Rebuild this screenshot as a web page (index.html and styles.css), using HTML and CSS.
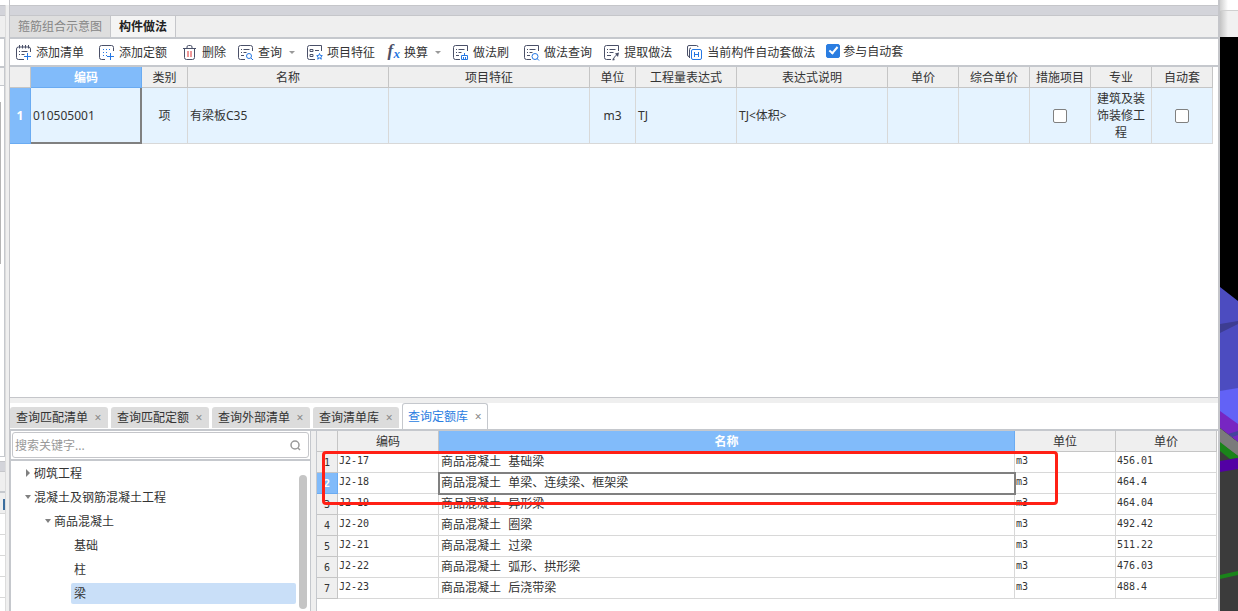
FILE: index.html
```html
<!DOCTYPE html>
<html lang="zh-CN">
<head>
<meta charset="utf-8">
<title>构件做法</title>
<link rel="stylesheet" href="styles.css">
</head>
<body>
<div class="app">
  <aside class="edge" aria-hidden="true">
    <div class="edge-gap"></div>
    <div class="edge-title"></div>
    <div class="edge-tabs"></div>
    <div class="edge-tools"></div>
    <div class="edge-head"></div>
    <div class="edge-body"><div class="edge-thumb"></div></div>
    <div class="edge-title"></div>
    <div class="edge-tabs edge-tabs-low"></div>
    <div class="edge-row edge-row-marked"></div>
    <div class="edge-row"></div>
    <div class="edge-row"></div>
    <div class="edge-row"></div>
    <div class="edge-row"></div>
    <div class="edge-row edge-row-last"></div>
  </aside>
  <div class="splitter"></div>

  <main class="main">
    <div class="titlebar"></div>
    <nav class="top-tabs">
      <button type="button" class="top-tab">箍筋组合示意图</button>
      <button type="button" class="top-tab top-tab-active">构件做法</button>
    </nav>

    <div class="toolbar">
      <button type="button" class="tool tool-spaced">
        <svg class="icon" viewBox="0 0 16 16"><path d="M8 14.500H2.500a2 2 0 0 1-2-2V4a2 2 0 0 1 2-2h10a2 2 0 0 1 2 2v3M3.500 0v3.500M6.500 0v3.500M9.500 0v3.500M12.500 0v3.500M3 6.500h1M5.500 6.500h6M3 9.500h1M5.500 9.500h3"/><path class="blue" d="M11.500 8v7M8 11.500h7"/></svg>
        添加清单</button>
      <button type="button" class="tool tool-spaced">
        <svg class="icon" viewBox="0 0 16 16"><path d="M6 14.500H2.500a2 2 0 0 1-2-2v-10a2 2 0 0 1 2-2h10a2 2 0 0 1 2 2V6"/><path class="blue" d="M11.500 8v7M8 11.500h7"/><path class="blue" stroke-dasharray="1 2" d="M4 4.500h8M4 7.500h6M4 10.500h4"/></svg>
        添加定额</button>
      <button type="button" class="tool">
        <svg class="icon" viewBox="0 0 16 16"><path d="M1 3.500h13M2.500 3.500v9a2 2 0 0 0 2 2h6a2 2 0 0 0 2-2v-9M5 3.500V2a1.500 1.500 0 0 1 1.500-1.500h2A1.500 1.500 0 0 1 10 2v1.500"/><path class="red" d="M6 6v6M9 6v6"/></svg>
        删除</button>
      <button type="button" class="tool">
        <svg class="icon" viewBox="0 0 16 16"><path d="M7 14.500H2.500a2 2 0 0 1-2-2v-10a2 2 0 0 1 2-2h10a2 2 0 0 1 2 2V6M3 4.500h1M5.500 4.500h6M3 7.500h1M5.500 7.500h3M3 10.500h3"/><circle class="blue" cx="11" cy="11" r="2.500"/><path class="blue" d="M13 13l2 2"/></svg>
        查询<span class="caret"></span></button>
      <button type="button" class="tool">
        <svg class="icon" viewBox="0 0 16 16"><path d="M8 14.500H2.500a2 2 0 0 1-2-2v-10a2 2 0 0 1 2-2h12V6M3 4.500h3v2H3zM3 9.500h3v2H3zM8 5.500h4"/><path class="blue" d="M12.500 8.500l.8 2 2 .2-1.500 1.300.5 2.200-1.800-1.200-1.800 1.200.5-2.200-1.500-1.300 2-.2z"/></svg>
        项目特征</button>
      <button type="button" class="tool">
        <span class="fx"><i class="fx-f">f</i><i class="fx-x">x</i></span>
        换算<span class="caret"></span></button>
      <button type="button" class="tool tool-spaced">
        <svg class="icon" viewBox="0 0 16 16"><path d="M7 14.500H2.500a2 2 0 0 1-2-2v-10a2 2 0 0 1 2-2h12V6M3 4.500h1M5.500 4.500h6M3 7.500h1M5.500 7.500h3M3 10.500h3"/><path class="blue" d="M8.500 14.500v-4h6v4zM11.500 8v2.500M10.500 14v-2M12.500 14v-2"/></svg>
        做法刷</button>
      <button type="button" class="tool">
        <svg class="icon" viewBox="0 0 16 16"><path d="M7 14.500H2.500a2 2 0 0 1-2-2v-10a2 2 0 0 1 2-2h12V6M3 4.500h1M5.500 4.500h6M3 7.500h1M5.500 7.500h3M3 10.500h3"/><circle class="blue" cx="11" cy="11.500" r="3"/><path class="blue" d="M13 13.500l2 2"/></svg>
        做法查询</button>
      <button type="button" class="tool tool-spaced">
        <svg class="icon" viewBox="0 0 16 16"><path d="M7 14.500H2.500a2 2 0 0 1-2-2v-10a2 2 0 0 1 2-2h12V6M3 4.500h1M5.500 4.500h6M3 7.500h1M5.500 7.500h4M3 10.500h4M9 15l1.500-3 3-3"/><path class="solid" d="M11 8.500l4-1-1 4.500zM8.500 15.500l.5-2.500 2 2z"/></svg>
        提取做法</button>
      <button type="button" class="tool">
        <svg class="icon" viewBox="0 0 16 16"><path d="M2 11.500a1.500 1.500 0 0 1-1.500-1.500V2A1.500 1.500 0 0 1 2 .5h7.500A1.500 1.500 0 0 1 11 2M2.500 13V4.500A1.500 1.500 0 0 1 4 3"/><rect class="blue" x="4.500" y="4.500" width="10" height="10" rx="1.500"/><path class="blue" d="M7.500 7v5M11.500 7v5M7.500 9.500h4"/></svg>
        当前构件自动套做法</button>
      <label class="join"><input type="checkbox" class="check" checked>参与自动套</label>
    </div>

    <section class="bill">
      <table class="grid bill-grid">
        <colgroup>
          <col class="c-num"><col class="c-code"><col class="c-kind"><col><col><col class="c-kind">
          <col class="c-expr"><col class="c-desc"><col class="c-price"><col class="c-price">
          <col class="c-flag"><col class="c-flag"><col class="c-flag">
        </colgroup>
        <thead>
          <tr><th></th><th class="head-active">编码</th><th>类别</th><th>名称</th><th>项目特征</th><th>单位</th><th>工程量表达式</th><th>表达式说明</th><th>单价</th><th>综合单价</th><th>措施项目</th><th>专业</th><th>自动套</th></tr>
        </thead>
        <tbody>
          <tr>
            <th class="num num-active">1</th><td class="cell-current">010505001</td><td class="center">项</td><td>有梁板C35</td><td></td><td class="center">m3</td><td>TJ</td><td>TJ&lt;体积&gt;</td><td></td><td></td>
            <td class="center"><input type="checkbox" class="check" aria-label="措施项目"></td>
            <td class="center">建筑及装饰装修工程</td>
            <td class="center"><input type="checkbox" class="check" aria-label="自动套"></td>
          </tr>
        </tbody>
      </table>
    </section>
    <div class="h-splitter"></div>

    <section class="query">
      <nav class="query-tabs">
        <div class="query-tab"><button type="button">查询匹配清单</button><button type="button" class="close" aria-label="关闭">×</button></div>
        <div class="query-tab"><button type="button">查询匹配定额</button><button type="button" class="close" aria-label="关闭">×</button></div>
        <div class="query-tab"><button type="button">查询外部清单</button><button type="button" class="close" aria-label="关闭">×</button></div>
        <div class="query-tab"><button type="button">查询清单库</button><button type="button" class="close" aria-label="关闭">×</button></div>
        <div class="query-tab query-tab-active"><button type="button">查询定额库</button><button type="button" class="close" aria-label="关闭">×</button></div>
      </nav>
      <div class="query-body">
        <div class="library">
          <div class="search">
            <input type="text" placeholder="搜索关键字..." aria-label="搜索关键字">
            <svg class="search-icon" viewBox="0 0 12 12"><circle cx="5" cy="5" r="4"/><path d="M8 8l2 2"/></svg>
          </div>
          <div class="tree-area">
            <ul class="tree">
              <li class="node level-1 closed">砌筑工程</li>
              <li class="node level-1 open">混凝土及钢筋混凝土工程</li>
              <li class="node level-2 open">商品混凝土</li>
              <li class="node level-3">基础</li>
              <li class="node level-3">柱</li>
              <li class="node level-3"><span class="picked">梁</span></li>
            </ul>
            <div class="scroll"><div class="scroll-thumb"></div></div>
          </div>
        </div>
        <div class="v-splitter"></div>
        <div class="results">
          <table class="grid results-grid">
            <colgroup><col class="c-num"><col class="c-expr"><col><col class="c-expr"><col class="c-expr"></colgroup>
            <thead><tr><th></th><th>编码</th><th class="head-active">名称</th><th>单位</th><th>单价</th></tr></thead>
            <tbody>
              <tr><th class="num">1</th><td>J2-17</td><td class="name">商品混凝土 基础梁</td><td>m3</td><td>456.01</td></tr>
              <tr><th class="num num-active">2</th><td>J2-18</td><td class="name name-current">商品混凝土 单梁、连续梁、框架梁</td><td>m3</td><td>464.4</td></tr>
              <tr><th class="num">3</th><td>J2-19</td><td class="name">商品混凝土 异形梁</td><td>m3</td><td>464.04</td></tr>
              <tr><th class="num">4</th><td>J2-20</td><td class="name">商品混凝土 圈梁</td><td>m3</td><td>492.42</td></tr>
              <tr><th class="num">5</th><td>J2-21</td><td class="name">商品混凝土 过梁</td><td>m3</td><td>511.22</td></tr>
              <tr><th class="num">6</th><td>J2-22</td><td class="name">商品混凝土 弧形、拱形梁</td><td>m3</td><td>476.03</td></tr>
              <tr><th class="num">7</th><td>J2-23</td><td class="name">商品混凝土 后浇带梁</td><td>m3</td><td>488.4</td></tr>
            </tbody>
          </table>
          <div class="highlight"></div>
        </div>
      </div>
    </section>
  </main>

  <aside class="scene" aria-hidden="true">
    <div class="scene-top"></div>
    <div class="scene-bar"></div>
    <svg class="scene-view" viewBox="0 37 18 574" preserveAspectRatio="none">
      <rect y="37" width="18" height="574" fill="#000"/>
      <path fill="#3b3b3b" d="M0 440H18V611H0z"/>
      <path fill="#4c4cc0" d="M0 287L18 301V389L0 392z"/>
      <path fill="#3d3d92" d="M0 324L18 321V324L0 333z"/>
      <path fill="#6262f6" d="M0 391L18 388V426L0 412z"/>
      <path fill="#7726c2" d="M0 411L18 424V442L0 428z"/>
      <path fill="#44449c" d="M8 434L18 431V435L12 437z"/>
      <path fill="#7b7b7b" d="M0 428L18 442V456L0 443z"/>
      <path fill="#1a841a" d="M0 442L18 456V458L10 459L0 451z"/>
      <path fill="#5200a4" d="M0 461L18 458V469L0 472z"/>
      <path fill="#1a841a" d="M0 575L18 571V575L0 579z"/>
    </svg>
  </aside>
</div>
</body>
</html>
```
FILE: styles.css
```css
*,
*::before,
*::after {
  box-sizing: border-box;
}

body {
  margin: 0;
  background: #fff;
  color: #333;
  font: 12px/17px "Noto Sans", "Noto Sans CJK SC", sans-serif;
}

button {
  padding: 0;
  border: 0;
  background: none;
  color: inherit;
  font: inherit;
  white-space: nowrap;
}

.app {
  display: flex;
  min-height: 100vh;
}

/* Neighbouring panel, visible as a narrow edge */
.edge {
  display: flex;
  flex-direction: column;
  flex: 0 0 5px;
}
.edge-gap { height: 5px; }
.edge-title {
  height: 11px;
  background: #d3d4da;
  border-top: 1px solid #c5c6ca;
  border-bottom: 1px solid #c5c6ca;
}
.edge-tabs {
  height: 23px;
  background: #efefef;
  border-bottom: 2px solid #c5c8cd;
}
.edge-tabs-low { height: 21px; }
.edge-tools {
  height: 28px;
  border-right: 1px solid #c5c8cd;
  border-bottom: 1px solid #c5c8cd;
}
.edge-head {
  height: 19px;
  background: #f6f6f6;
  border: 1px solid #c5c8cd;
  border-left: 0;
}
.edge-body {
  flex: 1;
  padding-top: 16px;
  border-right: 1px solid #c5c8cd;
  border-bottom: 1px solid #c5c8cd;
  margin-bottom: 4px;
}
.edge-thumb {
  width: 1px;
  height: 162px;
  background: #b4b4b4;
}
.edge-row {
  height: 21px;
  border-bottom: 1px solid #d8d8d8;
}
.edge-row-marked {
  background: linear-gradient(#3c6e9e, #3c6e9e) 3px 6px / 2px 11px no-repeat #efefef;
}
.edge-row-last {
  height: 13px;
  border-bottom: 0;
}

.splitter {
  flex: 0 0 4px;
  margin-top: 5px;
  background: #efefef;
  border-left: 1px solid #dcdcdc;
}

.main {
  display: flex;
  flex-direction: column;
  flex: 1;
  min-width: 0;
  border-left: 1px solid #c5c6ca;
  border-right: 2px solid #c5c6ca;
}

.titlebar {
  height: 11px;
  margin-top: 5px;
  background: #d3d4da;
  border-top: 1px solid #c5c6ca;
  border-bottom: 1px solid #c5c6ca;
}

.top-tabs {
  display: flex;
  height: 23px;
  background: #efefef;
  border-bottom: 2px solid #c5c8cd;
}
.top-tab {
  padding: 0 8px;
  background: #dedede;
  border-right: 1px solid #c5c6ca;
  color: #868686;
}
.top-tab-active {
  background: #f4f4f4;
  color: #222;
  font-weight: bold;
}

.toolbar {
  display: flex;
  align-items: center;
  gap: 12px;
  height: 28px;
  padding: 1px 0 0 6px;
  border-bottom: 2px solid #c5c8cd;
}
.tool {
  display: flex;
  align-items: center;
  gap: 4px;
}
.tool-spaced { margin-right: 3px; }
.icon {
  width: 16px;
  height: 16px;
  fill: none;
  stroke: #4a5068;
}
.icon .blue { stroke: #2577e3; }
.icon .red { stroke: #e03030; }
.icon .solid { fill: #4a5068; stroke: none; }
.fx {
  display: flex;
  width: 13px;
  font-family: "Liberation Serif", serif;
  font-weight: bold;
  line-height: 16px;
}
.fx-f {
  width: 7px;
  color: #4a5068;
  font-size: 17px;
}
.fx-x {
  padding-top: 3px;
  color: #2577e3;
  font-size: 13px;
}
.caret {
  margin-left: 3px;
  border: 3px solid transparent;
  border-top-color: #999;
  border-bottom: 0;
}
.join {
  display: flex;
  gap: 3px;
  margin-left: -1px;
  padding-bottom: 3px;
  align-items: center;
}

.check {
  appearance: none;
  display: block;
  width: 14px;
  height: 14px;
  margin: 0 auto;
  background: #fff;
  border: 1px solid #808080;
  border-radius: 2px;
}
.check:checked {
  background: #2a7de1;
  border-color: #2a7de1;
}
.check:checked::after {
  content: "";
  display: block;
  width: 5px;
  height: 9px;
  margin: 0 4px;
  border: solid #fff;
  border-width: 0 2px 2px 0;
  transform: rotate(40deg);
}

/* Grids */
.grid {
  width: 100%;
  table-layout: fixed;
  border-collapse: separate;
  border-spacing: 0;
}
.grid th {
  padding: 0;
  background: #efefef;
  border-right: 1px solid #c5c5c5;
  border-bottom: 1px solid #c5c5c5;
  font-weight: normal;
}
.grid thead th { height: 21px; }
.grid td {
  padding: 2px;
  border-right: 1px solid #d8d8d8;
  border-bottom: 1px solid #d8d8d8;
}
.grid .center { text-align: center; }
.grid .head-active,
.grid .num-active {
  background: #81bbfa;
  border-color: #6aabf2;
  color: #fff;
  font-weight: bold;
}
.c-num { width: 21px; }
.c-code { width: 111px; }
.c-kind { width: 46px; }
.c-expr { width: 101px; }
.c-desc { width: 151px; }
.c-price { width: 71px; }
.c-flag { width: 61px; }

.bill {
  flex: 1;
  padding-right: 5px;
  border-bottom: 1px solid #c5c6ca;
}
.bill-grid td { background: #e5f3ff; }
.bill-grid .cell-current {
  border-right: 2px solid #808080;
  border-bottom: 2px solid #808080;
}

.h-splitter {
  height: 5px;
  background: #efefef;
}

.query-tabs {
  display: flex;
  align-items: flex-end;
  gap: 3px;
  height: 26px;
}
.query-tab {
  display: flex;
  align-items: center;
  gap: 6px;
  height: 21px;
  margin-bottom: 1px;
  padding: 0 6px;
  background: #dcdcdc;
  border-radius: 3px 3px 0 0;
}
.query-tab-active {
  height: 26px;
  margin-bottom: 0;
  background: #fff;
  border: 1px solid #c5c8cd;
  border-bottom: 0;
  padding: 0 5px;
  color: #2a7de1;
}
.close {
  width: 8px;
  color: #888;
}

.query-body {
  display: flex;
  border-top: 2px solid #c5c8cd;
}
.library {
  flex: 0 0 301px;
  border-left: 1px solid #c5c8cd;
  border-right: 1px solid #c5c8cd;
}
.search {
  display: flex;
  position: relative;
  padding: 1px;
  border-bottom: 2px solid #c5c8cd;
}
.search input {
  flex: 1;
  min-width: 0;
  height: 26px;
  padding: 0 28px 0 2px;
  border: 1px solid #c5c6ca;
  border-radius: 3px;
  font: inherit;
}
.search input::placeholder { color: #999; }
.search-icon {
  position: absolute;
  right: 8px;
  top: 9px;
  width: 12px;
  height: 12px;
  fill: none;
  stroke: #999;
  stroke-width: 1.5;
}

.tree-area {
  display: flex;
  height: 150px;
}
.tree {
  flex: 1;
  margin: 0;
  padding: 0;
  list-style: none;
}
.node {
  display: flex;
  align-items: center;
  height: 24px;
}
.node::before {
  content: "";
  width: 6px;
  margin-right: 3px;
}
.closed::before {
  width: 4px;
  margin: 0 4px 0 1px;
  border: 4px solid transparent;
  border-left-color: #808080;
  border-right: 0;
}
.open::before {
  border: 3px solid transparent;
  border-top: 4px solid #808080;
  border-bottom: 0;
}
.level-1 { padding-left: 14px; }
.level-2 { padding-left: 34px; }
.level-3 { padding-left: 54px; }
.picked {
  flex: 1;
  margin-left: -3px;
  padding: 2px 3px;
  background: #c9dff8;
  border-radius: 2px;
}
.scroll {
  flex: 0 0 14px;
  padding: 14px 3px 2px 3px;
}
.scroll-thumb {
  height: 134px;
  background: #c5c5c5;
  border-radius: 4px;
}

.v-splitter {
  flex: 0 0 6px;
  background: #efefef;
  border-right: 1px solid #c5c8cd;
}
.results {
  position: relative;
  flex: 1;
  padding-right: 1px;
}
.results-grid tbody th,
.results-grid tbody td {
  height: 21px;
  padding: 0 2px;
}
.results-grid tbody td {
  font: 10px/16px "DejaVu Sans Mono", monospace;
}
.results-grid tbody td:not(.name) {
  padding: 0 1px 2px;
}
.results-grid tbody .name {
  padding: 1px 2px 0;
  font: 12px/16px "Liberation Mono", "Noto Sans CJK SC", monospace;
}
.results-grid tbody .num {
  padding-top: 1px;
  font: 10px/16px "DejaVu Sans Mono", monospace;
}
.results-grid tbody .num-active { font-weight: bold; }
.results-grid tbody .name-current {
  outline: 2px solid #808080;
  outline-offset: -1px;
}

/* Red frame drawn over the first rows */
.highlight {
  position: absolute;
  top: 20px;
  left: 5px;
  right: 160px;
  height: 54px;
  border: 3px solid #ff2015;
  border-radius: 4px;
}

/* 3D view behind the window */
.scene {
  display: flex;
  flex-direction: column;
  flex: 0 0 18px;
}
.scene-top {
  height: 11px;
  background: linear-gradient(90deg, #d0d0d0, #fff 8px);
  border-bottom: 1px solid #d0d0d0;
}
.scene-bar {
  height: 26px;
  background: linear-gradient(90deg, #c4c4c4, #f1f1f1 8px);
}
.scene-view {
  display: block;
  width: 18px;
  flex: 1;
  min-height: 0;
}
```
